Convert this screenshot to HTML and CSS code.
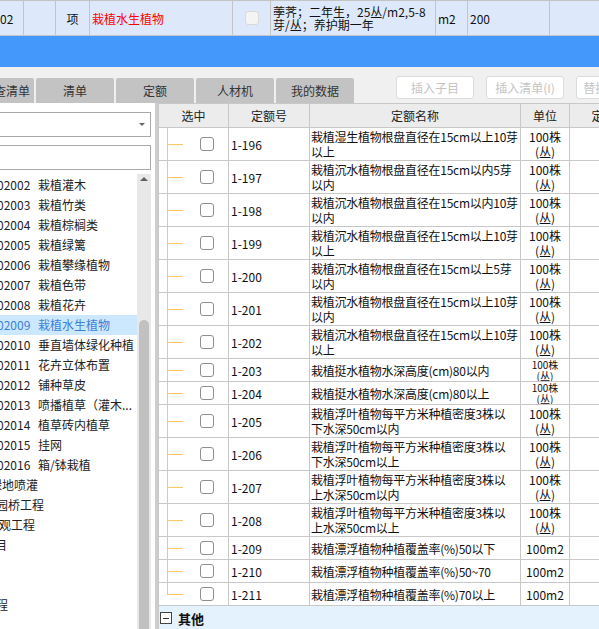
FILE: index.html
```html
<!DOCTYPE html>
<html lang="zh">
<head>
<meta charset="utf-8">
<title>定额</title>
<link rel="stylesheet" href="styles.css">
</head>
<body>
<div class="bill-row">
  <div class="bc c1">02</div>
  <div class="bc c2"></div>
  <div class="bc c3">项</div>
  <div class="bc c4">栽植水生植物</div>
  <div class="bc c5"><span class="cb-light"></span></div>
  <div class="bc c6"><div class="desc">荸荠；二年生，25丛/m2,5-8<br>芽/丛；养护期一年</div></div>
  <div class="bc c7">m2</div>
  <div class="bc c8">200</div>
  <div class="bc c9"></div>
</div>
<div class="blue-band"></div>
<div class="toolbar">
  <div class="tabs">
    <div class="tab tab-first">查清单</div>
    <div class="tab">清单</div>
    <div class="tab">定额</div>
    <div class="tab">人材机</div>
    <div class="tab">我的数据</div>
  </div>
  <div class="actions">
    <button class="btn">插入子目</button>
    <button class="btn">插入清单(I)</button>
    <button class="btn">替换子目(R)</button>
  </div>
</div>
<div class="main">
  <div class="side">
    <div class="combo"><span class="caret"></span></div>
    <div class="search"></div>
    <div class="tree">
      <div class="tree-list">
        <div class="ti"><span class="code">02002</span><span>栽植灌木</span></div>
        <div class="ti"><span class="code">02003</span><span>栽植竹类</span></div>
        <div class="ti"><span class="code">02004</span><span>栽植棕榈类</span></div>
        <div class="ti"><span class="code">02005</span><span>栽植绿篱</span></div>
        <div class="ti"><span class="code">02006</span><span>栽植攀缘植物</span></div>
        <div class="ti"><span class="code">02007</span><span>栽植色带</span></div>
        <div class="ti"><span class="code">02008</span><span>栽植花卉</span></div>
        <div class="ti selected"><span class="code">02009</span><span>栽植水生植物</span></div>
        <div class="ti"><span class="code">02010</span><span>垂直墙体绿化种植</span></div>
        <div class="ti"><span class="code">02011</span><span>花卉立体布置</span></div>
        <div class="ti"><span class="code">02012</span><span>铺种草皮</span></div>
        <div class="ti"><span class="code">02013</span><span>喷播植草（灌木...</span></div>
        <div class="ti"><span class="code">02014</span><span>植草砖内植草</span></div>
        <div class="ti"><span class="code">02015</span><span>挂网</span></div>
        <div class="ti"><span class="code">02016</span><span>箱/钵栽植</span></div>
        <div class="ti t-a">绿地喷灌</div>
        <div class="ti t-b">园路、园桥工程</div>
        <div class="ti t-c">园林景观工程</div>
        <div class="ti t-d">措施项目</div>
        <div class="ti"></div>
        <div class="ti"></div>
        <div class="ti t-e">工程</div>
      </div>
      <div class="vscroll">
        <span class="up"></span>
        <span class="thumb"></span>
      </div>
    </div>
  </div>
  <div class="splitter"></div>
  <div class="grid">
    <div class="grow head">
      <div class="gc g1">选中</div>
      <div class="gc g2">定额号</div>
      <div class="gc g3">定额名称</div>
      <div class="gc g4">单位</div>
      <div class="gc g5">定额价</div>
    </div>

    <div class="grow r2">
      <div class="gc g1 sel"><span class="tl"></span><span class="cb"></span></div>
      <div class="gc g2 code-c">1-196</div>
      <div class="gc g3 name-c"><div>栽植湿生植物根盘直径在15cm以上10芽<br>以上</div></div>
      <div class="gc g4 unit-c"><div>100株<br>(丛)</div></div>
      <div class="gc g5"></div>
    </div>
    <div class="grow r2">
      <div class="gc g1 sel"><span class="tl"></span><span class="cb"></span></div>
      <div class="gc g2 code-c">1-197</div>
      <div class="gc g3 name-c"><div>栽植沉水植物根盘直径在15cm以内5芽<br>以内</div></div>
      <div class="gc g4 unit-c"><div>100株<br>(丛)</div></div>
      <div class="gc g5"></div>
    </div>
    <div class="grow r2">
      <div class="gc g1 sel"><span class="tl"></span><span class="cb"></span></div>
      <div class="gc g2 code-c">1-198</div>
      <div class="gc g3 name-c"><div>栽植沉水植物根盘直径在15cm以内10芽<br>以内</div></div>
      <div class="gc g4 unit-c"><div>100株<br>(丛)</div></div>
      <div class="gc g5"></div>
    </div>
    <div class="grow r2">
      <div class="gc g1 sel"><span class="tl"></span><span class="cb"></span></div>
      <div class="gc g2 code-c">1-199</div>
      <div class="gc g3 name-c"><div>栽植沉水植物根盘直径在15cm以上10芽<br>以上</div></div>
      <div class="gc g4 unit-c"><div>100株<br>(丛)</div></div>
      <div class="gc g5"></div>
    </div>
    <div class="grow r2">
      <div class="gc g1 sel"><span class="tl"></span><span class="cb"></span></div>
      <div class="gc g2 code-c">1-200</div>
      <div class="gc g3 name-c"><div>栽植沉水植物根盘直径在15cm以上5芽<br>以内</div></div>
      <div class="gc g4 unit-c"><div>100株<br>(丛)</div></div>
      <div class="gc g5"></div>
    </div>
    <div class="grow r2">
      <div class="gc g1 sel"><span class="tl"></span><span class="cb"></span></div>
      <div class="gc g2 code-c">1-201</div>
      <div class="gc g3 name-c"><div>栽植沉水植物根盘直径在15cm以上10芽<br>以内</div></div>
      <div class="gc g4 unit-c"><div>100株<br>(丛)</div></div>
      <div class="gc g5"></div>
    </div>
    <div class="grow r2">
      <div class="gc g1 sel"><span class="tl"></span><span class="cb"></span></div>
      <div class="gc g2 code-c">1-202</div>
      <div class="gc g3 name-c"><div>栽植沉水植物根盘直径在15cm以上10芽<br>以上</div></div>
      <div class="gc g4 unit-c"><div>100株<br>(丛)</div></div>
      <div class="gc g5"></div>
    </div>
    <div class="grow r1">
      <div class="gc g1 sel"><span class="tl"></span><span class="cb"></span></div>
      <div class="gc g2 code-c">1-203</div>
      <div class="gc g3 name-c"><div>栽植挺水植物水深高度(cm)80以内</div></div>
      <div class="gc g4 unit-c tight"><div>100株<br>(丛)</div></div>
      <div class="gc g5"></div>
    </div>
    <div class="grow r1">
      <div class="gc g1 sel"><span class="tl"></span><span class="cb"></span></div>
      <div class="gc g2 code-c">1-204</div>
      <div class="gc g3 name-c"><div>栽植挺水植物水深高度(cm)80以上</div></div>
      <div class="gc g4 unit-c tight"><div>100株<br>(丛)</div></div>
      <div class="gc g5"></div>
    </div>
    <div class="grow r2">
      <div class="gc g1 sel"><span class="tl"></span><span class="cb"></span></div>
      <div class="gc g2 code-c">1-205</div>
      <div class="gc g3 name-c"><div>栽植浮叶植物每平方米种植密度3株以<br>下水深50cm以内</div></div>
      <div class="gc g4 unit-c"><div>100株<br>(丛)</div></div>
      <div class="gc g5"></div>
    </div>
    <div class="grow r2">
      <div class="gc g1 sel"><span class="tl"></span><span class="cb"></span></div>
      <div class="gc g2 code-c">1-206</div>
      <div class="gc g3 name-c"><div>栽植浮叶植物每平方米种植密度3株以<br>下水深50cm以上</div></div>
      <div class="gc g4 unit-c"><div>100株<br>(丛)</div></div>
      <div class="gc g5"></div>
    </div>
    <div class="grow r2">
      <div class="gc g1 sel"><span class="tl"></span><span class="cb"></span></div>
      <div class="gc g2 code-c">1-207</div>
      <div class="gc g3 name-c"><div>栽植浮叶植物每平方米种植密度3株以<br>上水深50cm以内</div></div>
      <div class="gc g4 unit-c"><div>100株<br>(丛)</div></div>
      <div class="gc g5"></div>
    </div>
    <div class="grow r2">
      <div class="gc g1 sel"><span class="tl"></span><span class="cb"></span></div>
      <div class="gc g2 code-c">1-208</div>
      <div class="gc g3 name-c"><div>栽植浮叶植物每平方米种植密度3株以<br>上水深50cm以上</div></div>
      <div class="gc g4 unit-c"><div>100株<br>(丛)</div></div>
      <div class="gc g5"></div>
    </div>
    <div class="grow r1">
      <div class="gc g1 sel"><span class="tl"></span><span class="cb"></span></div>
      <div class="gc g2 code-c">1-209</div>
      <div class="gc g3 name-c"><div>栽植漂浮植物种植覆盖率(%)50以下</div></div>
      <div class="gc g4 unit-c"><div>100m2</div></div>
      <div class="gc g5"></div>
    </div>
    <div class="grow r1">
      <div class="gc g1 sel"><span class="tl"></span><span class="cb"></span></div>
      <div class="gc g2 code-c">1-210</div>
      <div class="gc g3 name-c"><div>栽植漂浮植物种植覆盖率(%)50~70</div></div>
      <div class="gc g4 unit-c"><div>100m2</div></div>
      <div class="gc g5"></div>
    </div>
    <div class="grow r1">
      <div class="gc g1 sel"><span class="tl tl-last"></span><span class="cb"></span></div>
      <div class="gc g2 code-c">1-211</div>
      <div class="gc g3 name-c"><div>栽植漂浮植物种植覆盖率(%)70以上</div></div>
      <div class="gc g4 unit-c"><div>100m2</div></div>
      <div class="gc g5"></div>
    </div>
    <div class="group">
      <span class="minus"><span class="minus-bar"></span></span>
      <span class="group-title">其他</span>
    </div>
  </div>
</div>
</body>
</html>
```
FILE: styles.css
```css
* { box-sizing: border-box; }
html, body { margin: 0; padding: 0; }
body {
  width: 599px;
  height: 629px;
  overflow: hidden;
  background: #fff;
  color: #222;
  font-family: "Noto Sans CJK SC", "Noto Sans", sans-serif;
  font-size: 12px;
}

/* top bill row */
.bill-row {
  display: flex;
  height: 36px;
  background: #dde9fb;
  border-top: 1px solid #c4c4c4;
  border-bottom: 1px solid #c4c4c4;
  overflow: hidden;
}
.bc {
  flex: none;
  display: flex;
  align-items: center;
  padding-left: 2px;
  border-right: 1px solid #c4c4c4;
  white-space: nowrap;
  overflow: hidden;
  color: #111;
}
.c1 { width: 24px; padding-left: 0; }
.c2 { width: 32px; }
.c3 { width: 34px; justify-content: center; padding-left: 0; }
.c4 { width: 143px; color: #f00; }
.c5 { width: 38px; justify-content: center; padding-left: 0; }
.c6 { width: 165px; }
.c7 { width: 32px; }
.c8 { width: 82px; }
.c9 { width: 60px; border-right: none; }
.desc { line-height: 13px; }
.cb-light {
  width: 14px;
  height: 14px;
  background: #f4f4f4;
  border: 1px solid #d9d9d9;
  border-radius: 3px;
}

.blue-band { height: 31px; background: #4598fb; }

/* toolbar */
.toolbar {
  display: flex;
  height: 36px;
  background: #f0f0f0;
  overflow: hidden;
}
.tabs {
  display: flex;
  gap: 2px;
  margin-top: 11px;
  height: 25px;
  flex: none;
}
.tab {
  width: 78px;
  display: flex;
  align-items: center;
  justify-content: center;
  background: #c3c3c3;
  border-radius: 2px 2px 0 0;
  color: #333;
}
.tab-first {
  width: 34px;
  justify-content: flex-end;
  padding-right: 4px;
  border-radius: 0 2px 0 0;
  white-space: nowrap;
  overflow: hidden;
}
.actions {
  display: flex;
  gap: 12px;
  margin-left: 42px;
  margin-top: 9px;
  height: 23px;
  flex: none;
}
.btn {
  width: 78px;
  height: 23px;
  padding: 0;
  background: #fff;
  border: 1px solid #dcdcdc;
  border-radius: 3px;
  color: #c4c4c4;
  font: inherit;
  white-space: nowrap;
  overflow: hidden;
}

/* main area */
.main { display: flex; height: 526px; }
.side {
  width: 155px;
  flex: none;
  padding-top: 9px;
  background: #fff;
  overflow: hidden;
}
.combo {
  width: 161px;
  height: 25px;
  margin-left: -10px;
  border: 1px solid #a9a9a9;
  display: flex;
  align-items: center;
  justify-content: flex-end;
  padding-right: 5px;
}
.caret {
  width: 0;
  height: 0;
  border-left: 3px solid transparent;
  border-right: 3px solid transparent;
  border-top: 3px solid #666;
}
.search {
  width: 161px;
  height: 25px;
  margin-left: -10px;
  margin-top: 8px;
  border: 1px solid #a9a9a9;
}
.tree {
  display: flex;
  margin-top: 4px;
  height: 455px;
}
.tree-list {
  width: 137px;
  flex: none;
  padding-top: 1px;
  overflow: hidden;
}
.ti {
  height: 20px;
  line-height: 20px;
  display: flex;
  white-space: nowrap;
  color: #222;
}
.ti .code { width: 41px; flex: none; margin-left: -3px; }
.ti.selected { background: #cce8ff; color: #3b7fd8; }
.t-a { margin-left: -10px; }
.t-b { margin-left: -40px; }
.t-c { margin-left: -37px; }
.t-d { margin-left: -41px; }
.t-e { margin-left: -16px; }

.vscroll {
  width: 14px;
  flex: none;
  background: #e8e8e8;
  display: flex;
  flex-direction: column;
  align-items: center;
}
.up {
  width: 0;
  height: 0;
  margin-top: 3px;
  border-left: 4px solid transparent;
  border-right: 4px solid transparent;
  border-bottom: 4px solid #606060;
}
.thumb {
  width: 10px;
  flex: 1;
  margin-top: 139px;
  background: #c1c1c1;
  border-radius: 5px 5px 0 0;
}

.splitter { width: 3px; flex: none; background: #cdcdcd; }

/* grid */
.grid {
  flex: 1;
  min-width: 0;
  border-top: 1px solid #c8c8c8;
  border-left: 1px solid #c8c8c8;
  background: #fff;
  overflow: hidden;
}
.grow {
  display: flex;
  border-bottom: 1px solid #c8c8c8;
}
.gc {
  flex: none;
  display: flex;
  align-items: center;
  border-right: 1px solid #c8c8c8;
  white-space: nowrap;
  overflow: hidden;
  color: #111;
}
.g1 { width: 70px; }
.g2 { width: 81px; }
.g3 { width: 211px; }
.g4 { width: 49px; }
.g5 { width: 80px; }

.head { height: 24px; background: #ececec; }
.head .gc { justify-content: center; color: #222; }
.r2 { height: 33px; }
.r1 { height: 23px; }

.sel { align-items: stretch; }
.tl {
  width: 16px;
  flex: none;
  margin-left: 8px;
  border-left: 1px solid #fdc36e;
  background-image: linear-gradient(#fdc36e, #fdc36e);
  background-repeat: no-repeat;
  background-position: 0 50%;
  background-size: 100% 1px;
}
.tl.tl-last {
  align-self: flex-start;
  height: 12px;
  background: none;
  border-bottom: 1px solid #fdc36e;
}
.cb {
  width: 14px;
  height: 14px;
  flex: none;
  align-self: center;
  margin-left: 17px;
  border: 1px solid #8f8f8f;
  border-radius: 3px;
  background: #fff;
}
.code-c { padding-left: 2px; }
.name-c { padding-left: 1px; line-height: 15px; letter-spacing: -0.25px; }
.unit-c { justify-content: center; text-align: center; line-height: 15px; }
.unit-c.tight { line-height: 11px; font-size: 10px; }

.group {
  height: 24px;
  display: flex;
  align-items: center;
  background: #e4f2fd;
}
.minus {
  width: 12px;
  height: 12px;
  margin-left: 1px;
  border: 1px solid #444;
  background: #fff;
  display: flex;
  align-items: center;
  justify-content: center;
}
.minus-bar { width: 6px; height: 1px; background: #333; }
.group-title { margin-left: 6px; font-weight: bold; font-size: 13px; color: #111; }
```
